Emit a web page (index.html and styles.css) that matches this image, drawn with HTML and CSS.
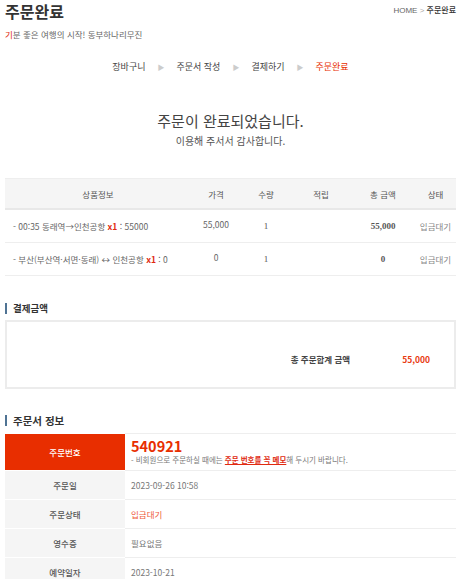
FILE: index.html
```html
<!DOCTYPE html>
<html lang="ko">
<head>
  <meta charset="UTF-8">
  <meta name="viewport" content="width=device-width, initial-scale=1.0">
  <title>주문완료</title>
  <link rel="stylesheet" href="styles.css">
</head>
<body>
  <div class="page">
    <header class="page-head">
      <div>
        <h1 class="page-title">주문완료</h1>
        <p class="slogan"><span class="red">기</span>분 좋은 여행의 시작! 동부하나리무진</p>
      </div>
      <div class="location">HOME <span class="sep">&gt;</span> <b>주문완료</b></div>
    </header>

    <ol class="steps">
      <li>장바구니</li>
      <li class="arrow">▶</li>
      <li>주문서 작성</li>
      <li class="arrow">▶</li>
      <li>결제하기</li>
      <li class="arrow">▶</li>
      <li class="on">주문완료</li>
    </ol>

    <section class="done">
      <p class="done__title">주문이 완료되었습니다.</p>
      <p class="done__sub">이용해 주서서 감사합니다.</p>
    </section>

    <table class="cart">
      <colgroup>
        <col style="width:186px">
        <col style="width:50px">
        <col style="width:50px">
        <col style="width:60px">
        <col style="width:64px">
        <col>
      </colgroup>
      <thead>
        <tr>
          <th>상품정보</th>
          <th>가격</th>
          <th>수량</th>
          <th>적립</th>
          <th>총 금액</th>
          <th>상태</th>
        </tr>
      </thead>
      <tbody>
        <tr>
          <td class="item">- 00:35 동래역→인천공항 <b class="red">x1</b> : 55000</td>
          <td class="price"><span>55,000</span></td>
          <td class="num">1</td>
          <td></td>
          <td class="num total">55,000</td>
          <td class="state">입금대기</td>
        </tr>
        <tr>
          <td class="item">- 부산(부산역·서면·동래) ↔ 인천공항 <b class="red">x1</b> : 0</td>
          <td class="price"><span>0</span></td>
          <td class="num">1</td>
          <td></td>
          <td class="num total">0</td>
          <td class="state">입금대기</td>
        </tr>
      </tbody>
    </table>

    <h2 class="sec-title">결제금액</h2>
    <div class="pay-box">
      <span class="pay-box__label">총 주문합계 금액</span>
      <span class="pay-box__value">55,000</span>
    </div>

    <h2 class="sec-title sec-title--lg">주문서 정보</h2>
    <table class="info">
      <tr class="info__no">
        <th>주문번호</th>
        <td>
          <strong class="order-no">540921</strong>
          <p class="note">- 비회원으로 주문하실 때에는 <u class="red">주문 번호를 꼭 메모</u>해 두시기 바랍니다.</p>
        </td>
      </tr>
      <tr>
        <th>주문일</th>
        <td>2023-09-26 10:58</td>
      </tr>
      <tr>
        <th>주문상태</th>
        <td class="red-soft">입금대기</td>
      </tr>
      <tr>
        <th>영수증</th>
        <td>필요없음</td>
      </tr>
      <tr>
        <th>예약일자</th>
        <td>2023-10-21</td>
      </tr>
    </table>
  </div>
</body>
</html>
```

FILE: styles.css
```css
html {
  overflow: hidden;
}

body {
  margin: 0;
  padding: 0;
  font-family: "Noto Sans CJK KR", "Noto Sans", sans-serif;
  color: #555;
  background: #fff;
}

p {
  margin: 0;
}

.red {
  color: #e02a10;
}

.page {
  padding: 0 10px 0 5px;
}

.page-head {
  display: flex;
  justify-content: space-between;
  align-items: flex-start;
}

.page-title {
  margin: 0;
  padding-top: 1px;
  font-size: 16px;
  line-height: 21px;
  font-weight: 700;
  color: #333;
}

.slogan {
  margin-top: 6px;
  font-size: 8.5px;
  line-height: 12px;
  color: #666;
}

.location {
  padding-top: 4px;
  font-family: "Liberation Sans", "Noto Sans CJK KR", sans-serif;
  font-size: 8px;
  color: #666;
}

.location .sep {
  color: #aaa;
}

.location b {
  font-family: "Noto Sans CJK KR", sans-serif;
  color: #333;
  font-weight: 500;
}

.steps {
  list-style: none;
  margin: 20px 0 0;
  padding: 0;
  display: flex;
  justify-content: center;
  gap: 12px;
  font-size: 9px;
  line-height: 14px;
  color: #444;
}

.steps .arrow {
  color: #ccc;
  font-size: 7px;
}

.steps .on {
  color: #e82e00;
}

.done {
  padding: 37px 0 30px;
  text-align: center;
}

.done__title {
  font-size: 15px;
  line-height: 20px;
  color: #444;
}

.done__sub {
  margin-top: 3px;
  font-size: 10px;
  line-height: 14px;
  color: #555;
}

.cart {
  width: 100%;
  border-collapse: collapse;
  table-layout: fixed;
  font-size: 8.5px;
}

.cart thead th {
  height: 29px;
  padding: 0;
  background: #f5f5f5;
  border-top: 1px solid #eee;
  border-bottom: 2px solid #e8e8e8;
  font-weight: 400;
  color: #555;
}

.cart td {
  height: 32px;
  padding: 0;
  border-bottom: 1px solid #eee;
  text-align: center;
  color: #666;
  line-height: 12px;
}

.cart .item {
  text-align: left;
  padding-left: 8px;
  white-space: nowrap;
}

.cart .price span {
  display: block;
  margin-top: -4px;
}

.cart .num {
  font-family: "Liberation Serif", serif;
  font-size: 9px;
  color: #555;
}

.cart .total {
  font-weight: 700;
}

.cart .state {
  color: #888;
}

.sec-title {
  margin: 27px 0 0;
  padding-left: 6px;
  border-left: 2px solid #4f7394;
  font-size: 9.5px;
  line-height: 11px;
  font-weight: 700;
  color: #333;
}

.sec-title--lg {
  margin-top: 26px;
  font-size: 10.5px;
}

.pay-box {
  margin-top: 6px;
  border: 2px solid #ececec;
  display: flex;
  justify-content: flex-end;
  align-items: center;
  padding: 8px 24px 0 0;
  box-sizing: border-box;
  height: 69px;
  font-size: 8.5px;
  font-weight: 700;
}

.pay-box__label {
  color: #444;
}

.pay-box__value {
  margin-left: 52px;
  color: #e83a10;
}

.info {
  width: 100%;
  margin-top: 7px;
  border-collapse: collapse;
  font-size: 8.5px;
}

.info th {
  width: 120px;
  height: 28px;
  padding: 0;
  background: #f5f5f5;
  font-weight: 500;
  color: #555;
  border-bottom: 1px solid #fff;
}

.info td {
  padding: 0 0 0 6px;
  border-bottom: 1px solid #eee;
  color: #777;
}

.info td.red-soft {
  color: #ee5a3a;
}

.info tr:first-child td {
  border-top: 1px solid #eee;
}

.info__no th {
  height: 36px;
  background: #e82e00;
  color: #fff;
}

.order-no {
  display: block;
  font-size: 14.5px;
  line-height: 16px;
  color: #e82e00;
}

.note {
  font-size: 7.5px;
  line-height: 11px;
  color: #777;
}

.note u {
  font-weight: 700;
}
```
